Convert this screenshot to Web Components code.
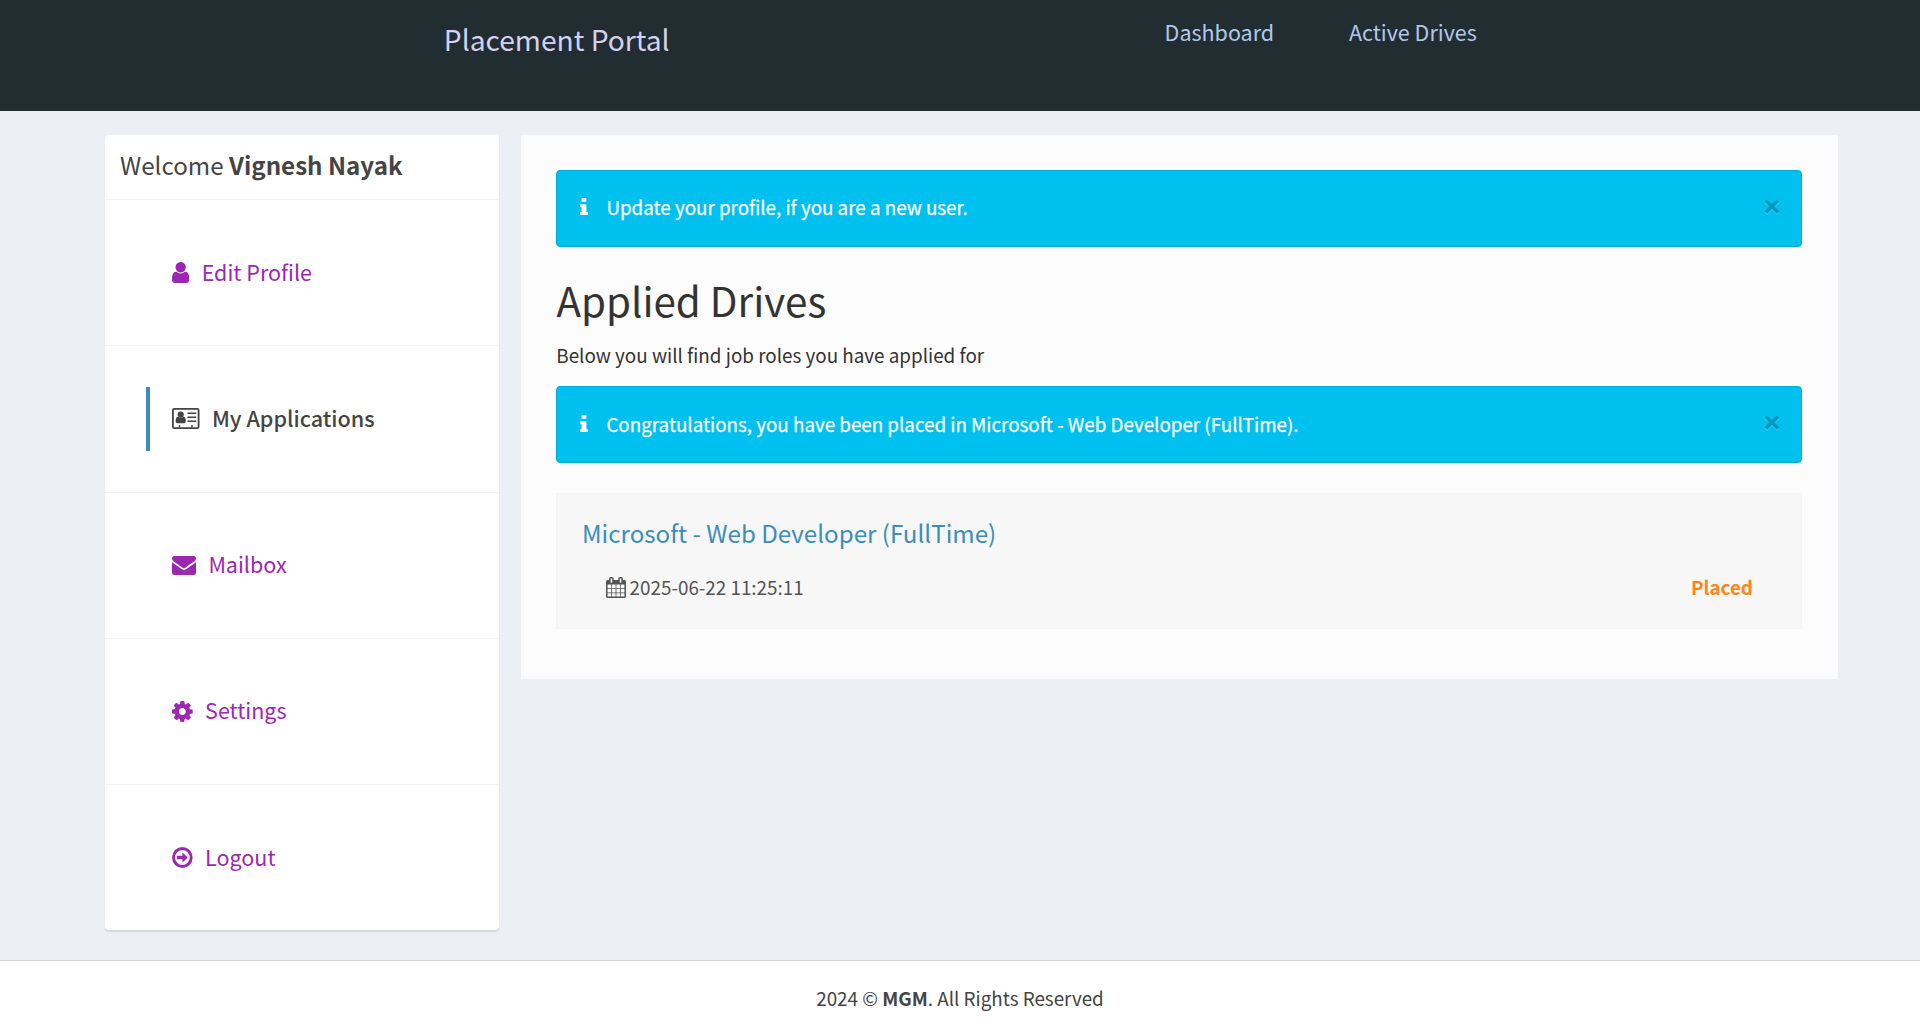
<!DOCTYPE html>
<html lang="en">
<head>
<meta charset="utf-8">
<title>Placement Portal</title>
<style>
  body { margin: 0; background: #ecf0f5; color: #444; font-family: "Noto Sans CJK SC", sans-serif; font-size: 18.83px; line-height: 30px; }
</style>
</head>
<body>
<portal-page>
  <portal-header slot="header" brand="Placement Portal">
    <a>Dashboard</a>
    <a>Active Drives</a>
  </portal-header>
  <side-menu slot="side" name="Vignesh Nayak">
    <menu-entry icon="user">Edit Profile</menu-entry>
    <menu-entry icon="idcard" active>My Applications</menu-entry>
    <menu-entry icon="envelope">Mailbox</menu-entry>
    <menu-entry icon="cog">Settings</menu-entry>
    <menu-entry icon="exit">Logout</menu-entry>
  </side-menu>
  <drives-panel slot="main" heading="Applied Drives" lead="Below you will find job roles you have applied for">
    <alert-box slot="notice">Update your profile, if you are a new user.</alert-box>
    <alert-box style="--text-pad:1px;--icon-pad:2px;--close-pad:4px">Congratulations, you have been placed in Microsoft - Web Developer (FullTime).</alert-box>
    <drive-card date="2025-06-22 11:25:11" status="Placed">Microsoft - Web Developer (FullTime)</drive-card>
  </drives-panel>
  <portal-footer slot="footer"></portal-footer>
</portal-page>

<script>
const ICONS = {
  user: { box: '256 128 1280 1536', w: 17.3, h: 21, body: '<path d="M1536 1399q0 109-62.5 187t-150.5 78h-854q-88 0-150.5-78t-62.5-187q0-85 8.5-160.5t31.5-152 58.5-131 94-89 134.5-34.5q131 128 313 128t313-128q76 0 134.5 34.5t94 89 58.5 131 31.5 152 8.5 160.5zm-256-887q0 159-112.5 271.5t-271.5 112.5-271.5-112.5-112.5-271.5 112.5-271.5 271.5-112.5 271.5 112.5 112.5 271.5z"/>' },
  idcard: { box: '0 0 27.5 21', w: 27.5, h: 21, body: '<rect x=".9" y=".9" width="25.700" height="19.200" rx="1.300" fill="none" stroke="currentColor" stroke-width="1.800"/><circle cx="8.700" cy="6.600" r="3.100"/><path d="M3.600 13q0-4.200 2.500-4.500 1.100 1.300 2.600 1.300t2.600-1.300q2.500.3 2.500 4.500 0 2.300-1.700 2.300h-6.800q-1.700 0-1.700-2.300zM15.500 4.500h8.700v1.600h-8.700zM15.500 8.500h8.700v1.600h-8.700zM15.500 12.400h8.700v1.600h-8.700zM6.700 17.200h1.600v2.200h-1.600zM19.200 17.200h1.600v2.200h-1.600z"/>' },
  envelope: { box: '0 256 1792 1408', w: 24, h: 19, body: '<path d="M1792 710v794q0 66-47 113t-113 47h-1472q-66 0-113-47t-47-113v-794q44 49 101 87 362 246 497 345 57 42 92.5 65.5t94.5 48 110 24.5h2q51 0 110-24.5t94.5-48 92.5-65.5q170-123 498-345 57-39 100-87zm0-294q0 79-49 151t-122 123q-376 261-468 325-10 7-42.500 31t-54 38.500-52 32.500-57.500 27-50 9h-2q-23 0-50-9t-57.500-27-52-32.500-54-38.500-42.500-31q-91-64-262-182.500t-205-142.500q-62-42-117-115.500t-55-136.500q0-78 41.500-130t118.500-52h1472q65 0 112.500 47t47.500 113z"/>' },
  cog: { box: '128 128 1536 1536', w: 20.7, h: 21, body: '<path d="M1152 896q0-106-75-181t-181-75-181 75-75 181 75 181 181 75 181-75 75-181zm512-109v222q0 12-8 23t-20 13l-185 28q-19 54-39 91 35 50 107 138 10 12 10 25t-9 23q-27 37-99 108t-94 71q-12 0-26-9l-138-108q-44 23-91 38-16 136-29 186-7 28-36 28h-222q-14 0-24.500-8.500t-11.500-21.500l-28-184q-49-16-90-37l-141 107q-10 9-25 9-14 0-25-11-126-114-165-168-7-10-7-23 0-12 8-23 15-21 51-66.500t54-70.500q-27-50-41-99l-183-27q-13-2-21-12.500t-8-23.500v-222q0-12 8-23t19-13l186-28q14-46 39-92-40-57-107-138-10-12-10-24 0-10 9-23 26-36 98.500-107.500t94.500-71.500q13 0 26 10l138 107q44-23 91-38 16-136 29-186 7-28 36-28h222q14 0 24.500 8.500t11.500 21.500l28 184q49 16 90 37l142-107q9-9 24-9 13 0 25 10 129 119 165 170 7 8 7 22 0 12-8 23-15 21-51 66.500t-54 70.500q26 50 41 98l183 28q13 2 21 12.500t8 23.500z"/>' },
  exit: { box: '0 0 21 21', w: 20.7, h: 21, body: '<circle cx="10.500" cy="10.500" r="9" fill="none" stroke="currentColor" stroke-width="2.900"/><path d="M5.300 8.700h5.300v-2.500q0-.7.6-.3l4.300 4.200q.4.400 0 .8l-4.300 4.200q-.6.400-.6-.3v-2.500h-5.300q-.4 0-.4-.4v-2.800q0-.4.4-.4z"/>' },
  info: { box: '576 128 640 1408', w: 8, h: 17, body: '<path d="M1216 1344v128q0 26-19 45t-45 19h-512q-26 0-45-19t-19-45v-128q0-26 19-45t45-19h64v-384h-64q-26 0-45-19t-19-45v-128q0-26 19-45t45-19h384q26 0 45 19t19 45v576h64q26 0 45 19t19 45zm-128-1152v192q0 26-19 45t-45 19h-256q-26 0-45-19t-19-45v-192q0-26 19-45t45-19h256q26 0 45 19t19 45z"/>' },
  calendar: { box: '64 0 1664 1792', w: 20, h: 21, body: '<path d="M192 1664h288v-288h-288v288zm352 0h320v-288h-320v288zm-352-352h288v-320h-288v320zm352 0h320v-320h-320v320zm-352-384h288v-288h-288v288zm736 736h320v-288h-320v288zm-384-736h320v-288h-320v288zm768 736h288v-288h-288v288zm-384-352h320v-320h-320v320zm-352-864v-288q0-13-9.500-22.500t-22.500-9.500h-64q-13 0-22.500 9.500t-9.500 22.500v288q0 13 9.500 22.500t22.500 9.500h64q13 0 22.500-9.500t9.500-22.500zm736 864h288v-320h-288v320zm-384-384h320v-288h-320v288zm384 0h288v-288h-288v288zm32-480v-288q0-13-9.500-22.500t-22.500-9.500h-64q-13 0-22.500 9.500t-9.500 22.500v288q0 13 9.500 22.500t22.500 9.500h64q13 0 22.500-9.500t9.500-22.500zm384-64v1280q0 52-38 90t-90 38h-1408q-52 0-90-38t-38-90v-1280q0-52 38-90t90-38h128v-96q0-66 47-113t113-47h64q66 0 113 47t47 113v96h384v-96q0-66 47-113t113-47h64q66 0 113 47t47 113v96h128q52 0 90 38t38 90z"/>' }
};

function define(name, render) {
  customElements.define(name, class extends HTMLElement {
    connectedCallback() {
      if (this.shadowRoot) return;
      this.attachShadow({ mode: 'open' }).innerHTML = render(this);
    }
  });
}

define('fa-icon', el => {
  const i = ICONS[el.getAttribute('name')];
  return `<style>:host{display:block;flex:none}svg{display:block;fill:currentColor}</style>
  <svg width="${i.w}" height="${i.h}" viewBox="${i.box}" preserveAspectRatio="none" aria-hidden="true">${i.body}</svg>`;
});

define('portal-page', () => `<style>
  :host{display:flex;flex-direction:column;height:1036px;overflow:hidden}
  .content{flex:none;height:849px;box-sizing:border-box;padding:24px 82px 0 105px;display:flex;align-items:flex-start;gap:22px}
</style>
<slot name="header"></slot>
<div class="content"><slot name="side"></slot><slot name="main"></slot></div>
<slot name="footer"></slot>`);

define('portal-header', el => `<style>
  :host{display:flex;flex:none;box-sizing:border-box;height:111px;background:#222d32;padding-left:443.800px}
  .brand{width:720.800px;padding-top:19px;font-size:28.2px;line-height:40px;color:#d5d1f0}
  nav{display:flex;gap:74.800px;padding-top:17px;font-size:21.5px;color:#b0c8ea}
</style>
<div class="brand">${el.getAttribute('brand')}</div><nav><slot></slot></nav>`);

define('side-menu', el => `<style>
  :host{display:block;flex:none;width:394px;background:#fff;border-radius:4px;box-shadow:0 1.250px 1.250px rgba(0,0,0,.1)}
  h3{margin:0;box-sizing:border-box;height:65px;padding:15px 15px 0;border-bottom:1px solid #f4f4f4;font-size:24.15px;line-height:30px;font-weight:400}
</style>
<h3>Welcome <b>${el.getAttribute('name')}</b></h3><slot></slot>`);

define('menu-entry', el => `<style>
  :host{display:flex;align-items:center;box-sizing:border-box;height:146.250px;padding-left:41px;border-bottom:1px solid #f4f4f4;font-size:21.5px;color:#9c27b0}
  :host(:last-child){height:145.250px;border-bottom:0}
  :host([active]){color:#444;font-weight:500;font-size:21.6px}
  .link{display:flex;align-items:center;gap:12.400px;height:64px;padding-left:22px;border-left:4px solid transparent}
  :host([active]) .link{border-left-color:#3c8dbc}
  .label{padding-bottom:2px}
</style>
<div class="link"><fa-icon name="${el.getAttribute('icon')}"></fa-icon><span class="label"><slot></slot></span></div>`);

define('drives-panel', el => `<style>
  :host{display:block;flex:none;box-sizing:border-box;width:1317px;height:544px;padding:35px 36px 0 35px;background:#fcfcfc}
  h2{margin:27.600px 0 15px;padding-left:.5px;font-size:40.300px;line-height:50px;font-weight:400;color:#333}
  p{margin:0 0 16.400px;padding-left:.3px;color:#333}
</style>
<slot name="notice"></slot><h2>${el.getAttribute('heading')}</h2><p>${el.getAttribute('lead')}</p><slot></slot>`);

define('alert-box', () => `<style>
  :host{display:flex;align-items:center;box-sizing:border-box;height:77px;padding:0 19px 0 23px;border:1px solid #00acd6;border-radius:4px;background:#00c0ef;color:#fff}
  fa-icon{margin-right:18.400px;padding-bottom:var(--icon-pad,4px)}
  .text{flex:1;padding-bottom:var(--text-pad,3px);font-size:18.8px;-webkit-text-stroke:.25px #fff}
  .close{width:20px;padding-bottom:var(--close-pad,6px);text-align:center;font:700 33px/30px "Open Sans",sans-serif;color:#000;opacity:.2;text-shadow:0 1.250px 0 #fff}
</style>
<fa-icon name="info"></fa-icon><span class="text"><slot></slot></span><span class="close">×</span>`);

define('drive-card', el => `<style>
  :host{display:block;box-sizing:border-box;height:136px;margin-top:30px;border:1px solid #f4f4f4;background:#f7f7f7}
  h4{margin:0;padding:22.400px 0 0 25px;font-size:24.150px;line-height:34px;font-weight:400;color:#3c8dbc}
  .row{display:flex;align-items:flex-start;margin-top:21.400px;padding:0 48px 0 49px;color:#555}
  fa-icon{padding-top:5.400px;margin-right:3.600px}
  .status{margin-left:auto;font-weight:700;color:#ff851b}
</style>
<h4><slot></slot></h4>
<div class="row"><fa-icon name="calendar"></fa-icon><span>${el.getAttribute('date')}</span><span class="status">${el.getAttribute('status')}</span></div>`);

define('portal-footer', () => `<style>
  :host{display:block;flex:1;box-sizing:border-box;padding-top:22px;border-top:1px solid #d2d6de;background:#fff;text-align:center}
</style>2024 © <b>MGM</b>. All Rights Reserved`);
</script>
</body>
</html>
